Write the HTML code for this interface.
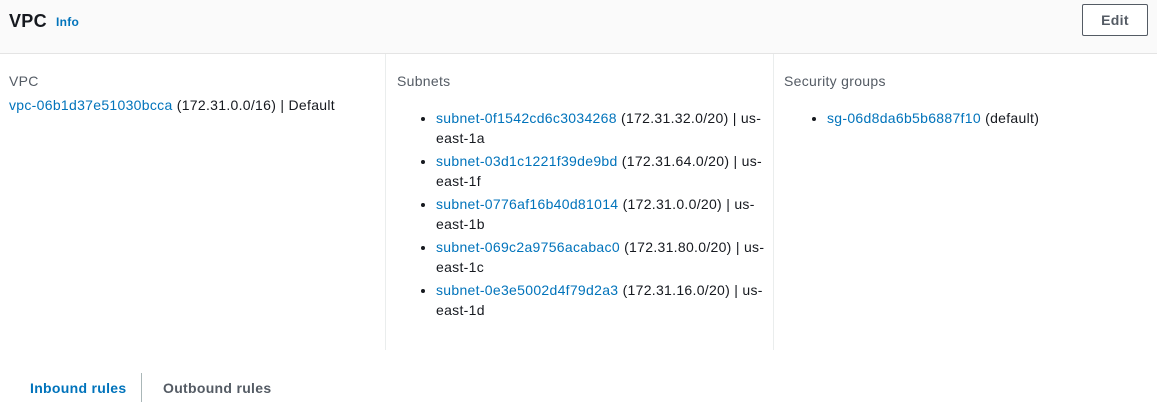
<!DOCTYPE html>
<html><head><style>
body{margin:0;width:1157px;height:402px;background:#fff;font-family:"Liberation Sans",sans-serif;font-size:14px;color:#16191f;position:relative;overflow:hidden;letter-spacing:0.3px}
.hdr{position:absolute;left:0;top:0;width:1157px;height:53px;background:#fafafa;border-bottom:1px solid #e4e4e4}
.t{position:absolute;left:9px;top:11px;font-size:18px;font-weight:bold}
.info{position:absolute;left:56px;top:15px;font-size:12px;font-weight:bold;color:#0073bb}
.edit{position:absolute;left:1082px;top:4px;width:66px;height:32px;border:1px solid #545b64;border-radius:2px;box-sizing:border-box;background:#fff;font-weight:bold;color:#545b64;text-align:center;line-height:30px}
.div{position:absolute;top:54px;height:296px;width:1px;background:#eaeded}
.lbl{position:absolute;top:73px;color:#545b64}
a{color:#0073bb;text-decoration:none}
ul{position:absolute;margin:0;padding:0 0 0 18px;line-height:20px}
li{margin-bottom:3px}
.tab{position:absolute;top:380px;font-weight:bold}
</style></head><body>
<div class="hdr"><div class="t">VPC</div><div class="info">Info</div><div class="edit">Edit</div></div>
<div class="div" style="left:385px"></div><div class="div" style="left:773px"></div>
<div class="lbl" style="left:9px">VPC</div>
<div style="position:absolute;left:9px;top:97px"><a>vpc-06b1d37e51030bcca</a> (172.31.0.0/16) | Default</div>
<div class="lbl" style="left:397px">Subnets</div>
<ul style="left:418px;top:108px;width:350px">
<li><a>subnet-0f1542cd6c3034268</a> (172.31.32.0/20) | us-<br>east-1a</li>
<li><a>subnet-03d1c1221f39de9bd</a> (172.31.64.0/20) | us-<br>east-1f</li>
<li><a>subnet-0776af16b40d81014</a> (172.31.0.0/20) | us-<br>east-1b</li>
<li><a>subnet-069c2a9756acabac0</a> (172.31.80.0/20) | us-<br>east-1c</li>
<li><a>subnet-0e3e5002d4f79d2a3</a> (172.31.16.0/20) | us-<br>east-1d</li>
</ul>
<div class="lbl" style="left:784px">Security groups</div>
<ul style="left:809px;top:108px"><li><a>sg-06d8da6b5b6887f10</a> (default)</li></ul>
<div class="tab" style="left:30px;color:#0073bb">Inbound rules</div>
<div style="position:absolute;left:141px;top:373px;width:1px;height:29px;background:#aab7b8"></div>
<div class="tab" style="left:163px;color:#545b64">Outbound rules</div>
</body></html>
